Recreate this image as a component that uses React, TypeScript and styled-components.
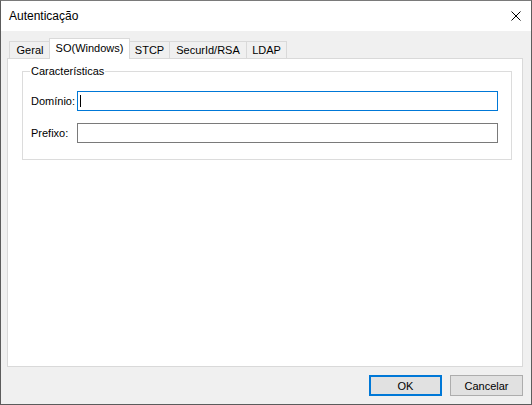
import React from "react";
import styled, { createGlobalStyle } from "styled-components";

const GlobalStyle = createGlobalStyle`
  html, body {
    margin: 0;
    padding: 0;
  }
  body {
    background: #f0f0f0;
    font-family: "Liberation Sans", Arial, sans-serif;
  }
`;

const Window = styled.div`
  width: 532px;
  height: 405px;
  box-sizing: border-box;
  border: 1px solid #5c5c5c;
  border-top-color: #7a7a7a;
  display: flex;
  flex-direction: column;
  background: #f0f0f0;
  font-family: "Liberation Sans", Arial, sans-serif;
  font-size: 11px;
  color: #000;
`;

const TitleBar = styled.div`
  flex: none;
  height: 30px;
  display: flex;
  align-items: center;
  justify-content: space-between;
  padding: 0 10px 0 8px;
  background: #fff;
  font-size: 12px;
`;

const CloseButton = styled.svg`
  display: block;
  width: 10px;
  height: 10px;
`;

const Body = styled.div`
  flex: 1;
  display: flex;
  flex-direction: column;
  padding: 7px 8px 0 6px;
  min-height: 0;
`;

const TabStrip = styled.div`
  flex: none;
  display: flex;
  align-items: flex-end;
  padding-left: 2px;
  margin-bottom: -1px;
`;

const Tab = styled.div<{ $active?: boolean; $w: number }>`
  position: relative;
  box-sizing: border-box;
  width: ${(p) => p.$w}px;
  height: ${(p) => (p.$active ? 21 : 17)}px;
  margin: 0 -1px ${(p) => (p.$active ? 0 : 1)}px
    ${(p) => (p.$active ? -1 : 0)}px;
  padding-top: ${(p) => (p.$active ? 2 : 1)}px;
  border: 1px solid #d9d9d9;
  border-bottom: none;
  background: ${(p) => (p.$active ? "#fff" : "#f0f0f0")};
  z-index: ${(p) => (p.$active ? 2 : 1)};
  line-height: 14px;
  text-align: center;
  white-space: nowrap;
`;

const Panel = styled.div`
  flex: 1;
  background: #fff;
  border: 1px solid #d9d9d9;
  padding: 5px 10px 0 14px;
`;

const Group = styled.fieldset`
  margin: 0;
  padding: 12px 13px 16px 7px;
  border: 1px solid #dcdcdc;
  display: grid;
  grid-template-columns: 47px 1fr;
  grid-auto-rows: 20px;
  row-gap: 12px;
  align-items: center;
`;

const Caption = styled.legend`
  padding: 0 1px;
  line-height: 15px;
  font-size: 11px;
`;

const Label = styled.label`
  padding-left: 1px;
  white-space: nowrap;
`;

const TextBox = styled.div<{ $focused?: boolean }>`
  box-sizing: border-box;
  height: 20px;
  border: 1px solid ${(p) => (p.$focused ? "#0078d7" : "#7a7a7a")};
  background: #fff;
  display: flex;
  align-items: center;
  padding-left: 2px;
`;

const Caret = styled.span`
  width: 1px;
  height: 12px;
  background: #000;
`;

const Footer = styled.div`
  flex: none;
  display: flex;
  justify-content: flex-end;
  gap: 8px;
  padding: 8px 0 8px;
`;

const Button = styled.div<{ $default?: boolean }>`
  box-sizing: border-box;
  width: 73px;
  height: 21px;
  display: flex;
  align-items: center;
  justify-content: center;
  background: #e1e1e1;
  border: ${(p) => (p.$default ? "2px solid #0078d7" : "1px solid #adadad")};
`;

const tabs = [
  { label: "Geral", w: 42 },
  { label: "SO(Windows)", w: 81, active: true },
  { label: "STCP", w: 41 },
  { label: "SecurId/RSA", w: 78 },
  { label: "LDAP", w: 41 },
];

export default function App() {
  return (
    <>
      <GlobalStyle />
      <Window>
        <TitleBar>
          <span>Autenticação</span>
          <CloseButton viewBox="0 0 10 10">
            <path d="M0.5 0.5 L9.5 9.5 M9.5 0.5 L0.5 9.5" stroke="#000" strokeWidth="1" />
          </CloseButton>
        </TitleBar>
        <Body>
          <TabStrip>
            {tabs.map((t) => (
              <Tab key={t.label} $w={t.w} $active={t.active}>
                {t.label}
              </Tab>
            ))}
          </TabStrip>
          <Panel>
            <Group>
              <Caption>Características</Caption>
              <Label>Domínio:</Label>
              <TextBox $focused>
                <Caret />
              </TextBox>
              <Label>Prefixo:</Label>
              <TextBox />
            </Group>
          </Panel>
          <Footer>
            <Button $default>OK</Button>
            <Button>Cancelar</Button>
          </Footer>
        </Body>
      </Window>
    </>
  );
}
